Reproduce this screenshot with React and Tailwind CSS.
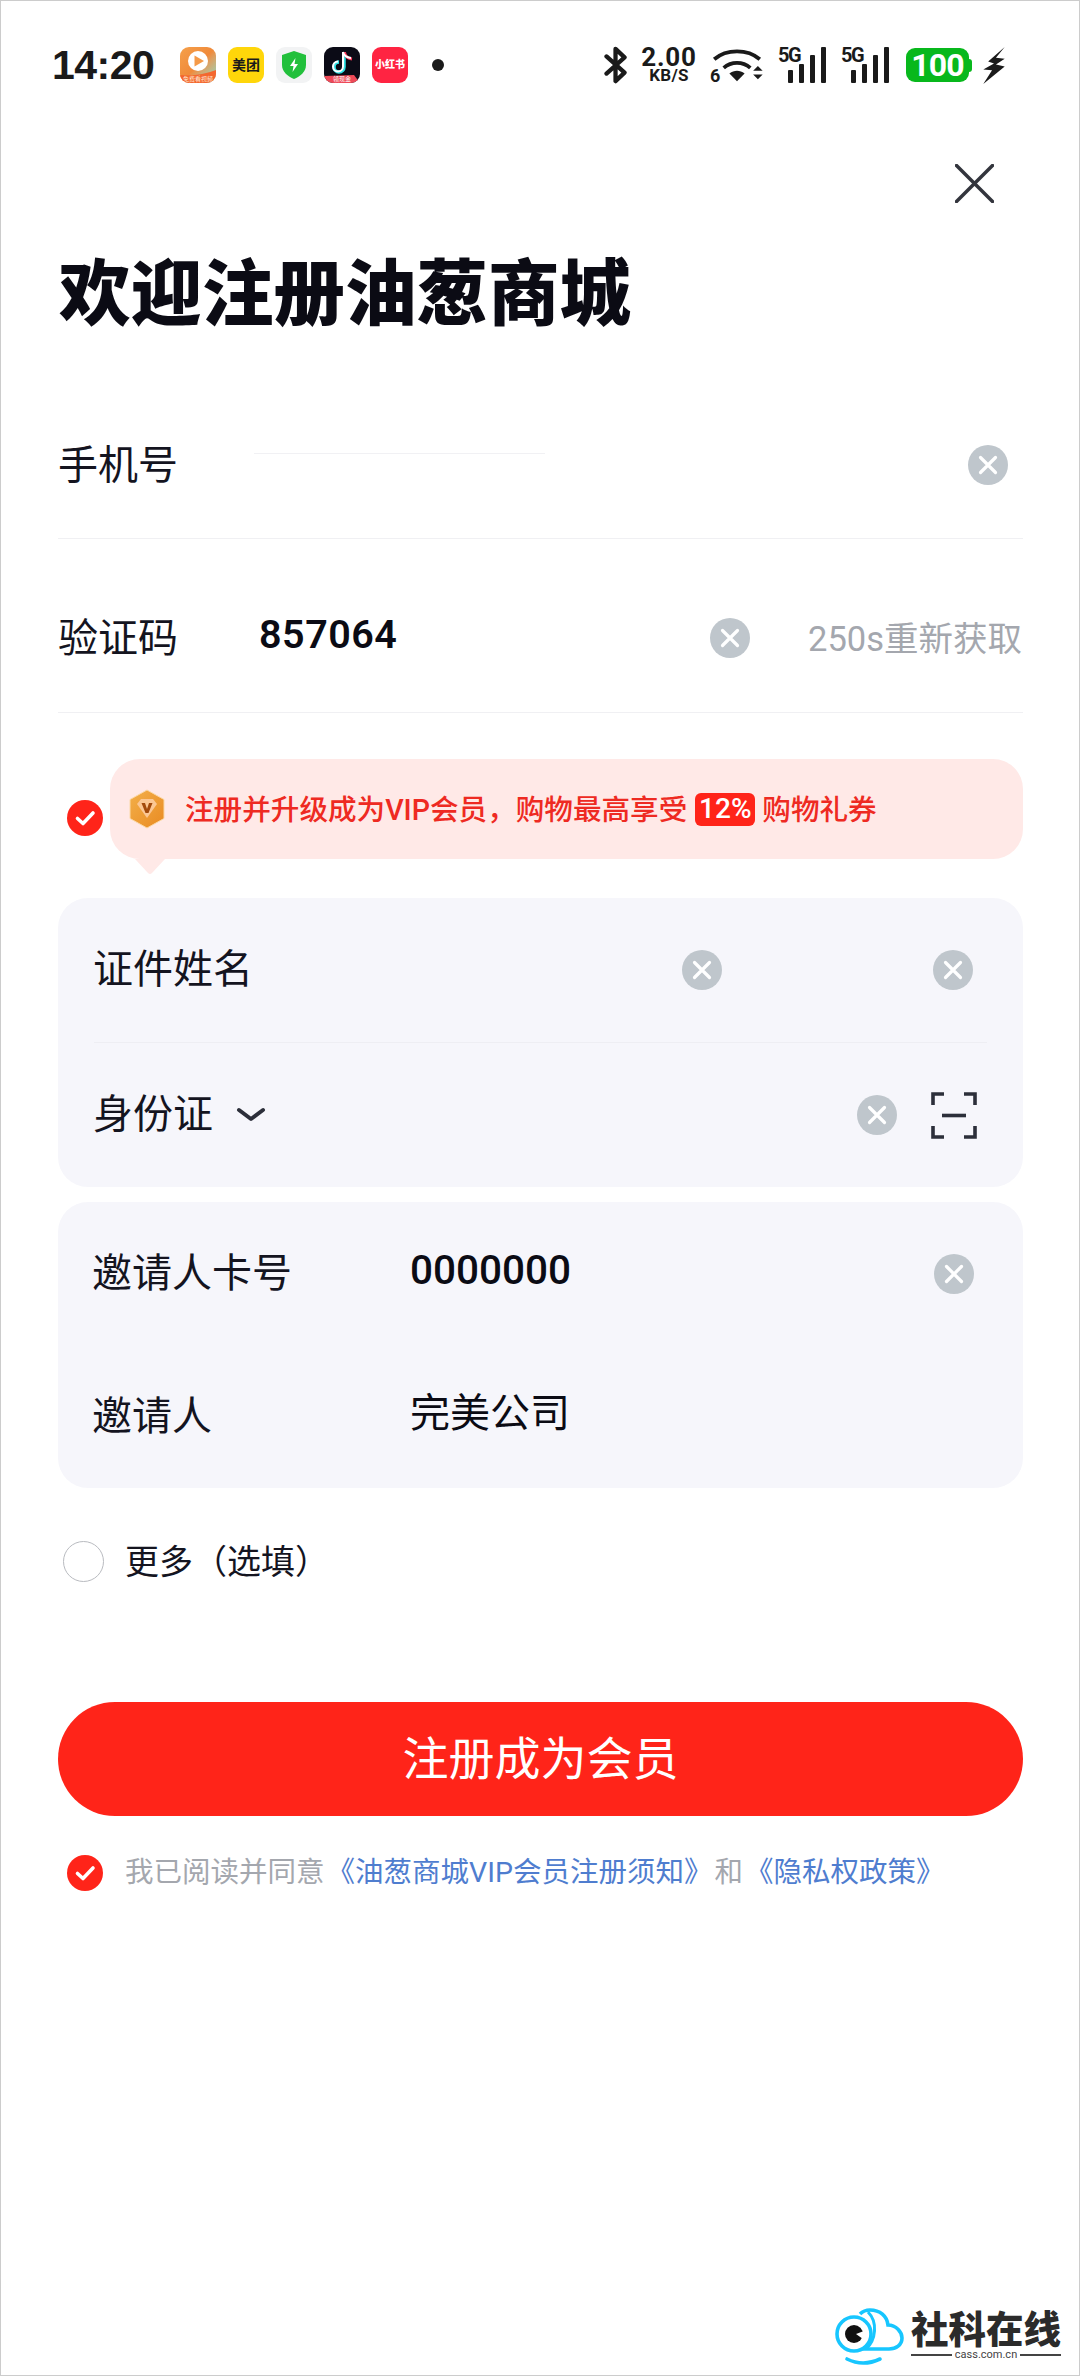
import React from 'react';

const font = { fontFamily: 'Roboto, "Noto Sans CJK SC", sans-serif' };

function ClearIcon({ className = '' }) {
  return (
    <svg width="40" height="40" viewBox="0 0 40 40" className={`shrink-0 ${className}`}>
      <circle cx="20" cy="20" r="20" fill="#bfc6cc" />
      <path d="M12.5 12.5 27.5 27.5M27.5 12.5 12.5 27.5" stroke="#fff" strokeWidth="3.2" strokeLinecap="round" />
    </svg>
  );
}

function CheckCircle() {
  return (
    <svg width="36" height="36" viewBox="0 0 36 36" className="shrink-0">
      <circle cx="18" cy="18" r="18" fill="#ff2419" />
      <path d="M10.5 18.5 16 23.5 26 13" fill="none" stroke="#fff" strokeWidth="3.6" strokeLinecap="round" strokeLinejoin="round" />
    </svg>
  );
}

function AppIcons() {
  return (
    <div className="flex gap-[12px] ml-[26px]">
      <div className="w-[36px] h-[36px] rounded-[9px] overflow-hidden relative bg-gradient-to-br from-[#f5a04a] via-[#f08a3a] to-[#63dcc8]">
        <svg width="36" height="36" viewBox="0 0 36 36">
          <circle cx="18" cy="14" r="10" fill="#fff" />
          <path d="M14.5 8.500 24 14 14.5 19.5Z" fill="#f59a48" />
          <path d="M0 28Q18 30 36 23V36H0Z" fill="#f4672f" />
        </svg>
        <span className="absolute left-0 right-0 bottom-[1px] text-center text-[6px] leading-[7px] text-[#ffe6d0] whitespace-nowrap">免费看视频</span>
      </div>
      <div className="w-[36px] h-[36px] rounded-[9px] bg-[#ffd60a] flex items-center justify-center text-[14px] leading-none font-bold text-[#1a1a1a] whitespace-nowrap">
        美团
      </div>
      <div className="w-[36px] h-[36px] rounded-[9px] bg-[#f2f3f4] flex items-center justify-center">
        <svg width="24" height="28" viewBox="0 0 24 28">
          <path d="M12 0 24 4V14C24 21 18 25.500 12 28 6 25.500 0 21 0 14V4Z" fill="#22c03c" />
          <path d="M13.500 7 8 15H11.500L10.500 21 16 13H12.500Z" fill="#fff" />
        </svg>
      </div>
      <div className="w-[36px] h-[36px] rounded-[9px] overflow-hidden relative bg-[#0b0b16]">
        <svg width="36" height="36" viewBox="0 0 36 36">
          <path d="M20 5V20A5 5 0 1 1 15 15" fill="none" stroke="#2fe3e6" strokeWidth="3.500" />
          <path d="M20.500 5Q21 11 28 12" fill="none" stroke="#ff3a5c" strokeWidth="3" />
          <path d="M19 5V19.500A5 5 0 1 1 14 14.500M19 5Q20 10 27 11" fill="none" stroke="#fff" strokeWidth="2" />
          <path d="M0 29 30 28 36 36H0Z" fill="#ee4a58" />
        </svg>
        <span className="absolute left-[9px] bottom-[1px] text-[6px] leading-[7px] text-white whitespace-nowrap">领现金</span>
      </div>
      <div className="w-[36px] h-[36px] rounded-[9px] bg-[#ff2442] flex items-center justify-center text-[10px] leading-none font-black text-white whitespace-nowrap">
        小红书
      </div>
    </div>
  );
}

function StatusRight() {
  return (
    <div className="flex items-center ml-auto mr-[74px] text-[#1a1a1a]">
      <svg width="24" height="38" viewBox="0 0 24 40">
        <path d="M2 11 21 28 11.500 37V3L21 12 2 29" fill="none" stroke="#1a1a1a" strokeWidth="4.500" strokeLinejoin="round" strokeLinecap="round" />
      </svg>
      <div className="w-[58px] ml-[12px] h-[36px] flex flex-col items-center font-bold leading-none">
        <span className="text-[26px] h-[20px] leading-[20px] tracking-[0.8px]">2.00</span>
        <span className="text-[17px] h-[16px] leading-[16px] tracking-[0.3px]">KB/S</span>
      </div>
      <div className="relative ml-[12px] w-[54px] h-[38px]">
        <svg width="54" height="38" viewBox="0 0 54 40">
          <path d="M3 14C16 3 38 3 51 14" fill="none" stroke="#1a1a1a" strokeWidth="4" />
          <path d="M13 23C21 16 33 16 41 23" fill="none" stroke="#1a1a1a" strokeWidth="4" />
          <path d="M19 29C24 25 30 25 35 29L27 37Z" fill="#1a1a1a" />
          <path d="M44 26H54L49 21ZM44 30H54L49 35Z" fill="#1a1a1a" />
        </svg>
        <span className="absolute left-0 bottom-[1px] text-[18px] leading-[14px] font-bold">6</span>
      </div>
      <Signal className="ml-[14px]" />
      <Signal className="ml-[14px]" />
      <div className="ml-[16px] w-[63px] h-[34px] rounded-[9px] bg-[#08b81c] flex items-center justify-center text-[32px] leading-none font-bold text-white tracking-tight">
        100
      </div>
      <div className="w-[3px] h-[13px] bg-[#08b81c] rounded-r-sm" />
      <svg width="22" height="37" viewBox="0 0 22 38" className="ml-[11px]">
        <path d="M22 0 5 15 11 17 0 23 9 24 0 38 22 20 13 18 22 12 13 11Z" fill="#1a1a1a" />
      </svg>
    </div>
  );
}

function Signal({ className = '' }) {
  return (
    <div className={`relative w-[49px] h-[36px] ${className}`}>
      <span className="absolute left-0 top-0 text-[20px] leading-[17px] font-bold tracking-[-1.5px]">5G</span>
      <svg width="49" height="36" viewBox="0 0 49 36">
        <rect x="10" y="23" width="5" height="13" rx="1" fill="#1a1a1a" />
        <rect x="21" y="17" width="5" height="19" rx="1" fill="#1a1a1a" />
        <rect x="32" y="8" width="5" height="28" rx="1" fill="#1a1a1a" />
        <rect x="43" y="0" width="5" height="36" rx="1" fill="#1a1a1a" />
      </svg>
    </div>
  );
}

function Medal() {
  return (
    <svg width="38" height="40" viewBox="0 0 38 40" className="shrink-0">
      <defs>
        <linearGradient id="medal" x1="0" y1="0" x2="1" y2="1">
          <stop offset="0" stopColor="#f3b04a" />
          <stop offset="1" stopColor="#e98a22" />
        </linearGradient>
      </defs>
      <path d="M19 1 36 10.500V29.500L19 39 2 29.500V10.500Z" fill="url(#medal)" stroke="#fbd9a8" strokeWidth="1" />
      <path d="M9 15 13 10H25L29 15 19 29Z" fill="#fbc794" />
      <path d="M13.500 14H17L19 20 21 14H24.500L20.500 24H17.500Z" fill="#a34a0c" />
    </svg>
  );
}

function ScanIcon({ className = '' }) {
  return (
    <svg width="46" height="47" viewBox="0 0 46 47" className={`shrink-0 ${className}`}>
      <path d="M13 2H2V13M33 2H44V13M2 34V45H13M44 34V45H33" fill="none" stroke="#2c2f3a" strokeWidth="3.600" />
      <path d="M11 23.500H35" stroke="#2c2f3a" strokeWidth="3.600" />
    </svg>
  );
}

function Logo() {
  return (
    <svg width="80" height="70" viewBox="0 0 80 70" className="shrink-0">
      <path d="M30 10C34 6 38 6 40 6 50 6 57 12 58 21 66 21 72 28 72 34 72 41 66 45 59 45H28" fill="none" stroke="#17c6ff" strokeWidth="3.600" />
      <path d="M38 8C48 18 46 36 36 45" fill="none" stroke="#17c6ff" strokeWidth="3" />
      <circle cx="24" cy="30" r="17" fill="#fff" stroke="#17c6ff" strokeWidth="3.600" />
      <circle cx="24" cy="30" r="9" fill="#111" />
      <path d="M34 27 26 30 33 35Z" fill="#fff" />
      <path d="M17 55Q33 63 50 55" fill="none" stroke="#17c6ff" strokeWidth="3.600" strokeLinecap="round" />
    </svg>
  );
}

export default function App() {
  return (
    <div style={font} className="relative w-[1080px] h-[2376px] overflow-hidden bg-white border border-[#cccccc] text-[#14141f]">
      {/* status bar */}
      <div className="h-[128px] flex items-center pl-[51px]">
        <span style={{ fontFamily: '"Liberation Sans", sans-serif' }} className="w-[102px] text-[41px] leading-none font-bold tracking-[-0.5px] text-[#1a1a1a] whitespace-nowrap">14:20</span>
        <AppIcons />
        <span className="ml-[24px] w-[12px] h-[12px] rounded-full bg-[#1a1a1a]" />
        <StatusRight />
      </div>

      {/* close */}
      <div className="pt-[35px] pr-[85px] flex justify-end">
        <svg width="39" height="39" viewBox="0 0 39 39">
          <path d="M1.500 1.500 37.500 37.500M37.500 1.500 1.500 37.500" stroke="#33353d" strokeWidth="3.500" strokeLinecap="round" />
        </svg>
      </div>

      <div className="pl-[57px] pr-[56px]">
        <h1 className="mt-[42px] ml-[1px] h-[100px] flex items-center text-[71.5px] leading-none font-black text-[#0b0b14] whitespace-nowrap">
          欢迎注册油葱商城
        </h1>

        <div className="relative mt-[47px] h-[147px] flex items-center pr-[15px] border-b border-[#f0f0f3]">
          <span className="text-[40px] leading-none pt-[2px]">手机号</span>
          <div className="absolute left-[196px] top-[61px] w-[291px] h-px bg-[#f1f1f4]" />
          <ClearIcon className="ml-auto" />
        </div>

        <div className="h-[174px] pt-[25px] flex items-center border-b border-[#f0f0f3]">
          <span className="w-[201px] text-[40px] leading-none pt-[2px]">验证码</span>
          <span className="flex-1 text-[39.5px] leading-none font-semibold tracking-[0.5px] text-[#0b0b14] -mt-[6px]">857064</span>
          <ClearIcon />
          <span className="w-[215px] ml-[58px] text-[34.5px] leading-none text-[#a4a7ae] whitespace-nowrap pt-[2px]">250s重新获取</span>
        </div>

        {/* vip banner */}
        <div className="mt-[46px] flex items-start">
          <div className="ml-[9px] mt-[41px]">
            <CheckCircle />
          </div>
          <div className="relative ml-[7px] flex-1 h-[100px] rounded-[30px] bg-[#ffe9e7] flex items-center pl-[18px] text-[28.6px] leading-none font-medium text-[#ee2a22] whitespace-nowrap">
            <Medal />
            <span className="ml-[19px] pt-[2px]">注册并升级成为VIP会员，购物最高享受</span>
            <span className="ml-[8px] w-[60px] h-[33px] rounded-[6px] bg-[#ff2419] text-white font-medium text-[28px] flex items-center justify-center">12%</span>
            <span className="ml-[7px] pt-[2px]">购物礼券</span>
            <svg width="30" height="16" viewBox="0 0 30 16" className="absolute left-[25px] top-[100px]">
              <path d="M0 0H30L17 14Q15 16 13 14Z" fill="#ffe9e7" />
            </svg>
          </div>
        </div>

        {/* id card */}
        <div className="mt-[39px] h-[289px] rounded-[30px] bg-[#f6f6fb]">
          <div className="h-[145px] flex items-center mx-[36px] border-b border-[#eeeef3] pr-[14px]">
            <span className="flex-1 -ml-[1px] text-[40px] leading-none">证件姓名</span>
            <ClearIcon />
            <ClearIcon className="ml-[211px]" />
          </div>
          <div className="h-[144px] flex items-center pl-[35px] pr-[46px]">
            <span className="text-[40px] leading-none">身份证</span>
            <svg width="30" height="16" viewBox="0 0 30 16" className="ml-[23px]">
              <path d="M3 3 15 12 27 3" fill="none" stroke="#2c2f3a" strokeWidth="4" strokeLinecap="round" strokeLinejoin="round" />
            </svg>
            <ClearIcon className="ml-auto" />
            <ScanIcon className="ml-[34px]" />
          </div>
        </div>

        {/* inviter */}
        <div className="mt-[15px] h-[286px] rounded-[30px] bg-[#f6f6fb] pl-[34px] pr-[49px]">
          <div className="h-[143px] flex items-center">
            <span className="w-[318px] text-[40px] leading-none">邀请人卡号</span>
            <span className="flex-1 text-[40.5px] leading-none font-medium text-[#0b0b14] -mt-[6px]">0000000</span>
            <ClearIcon />
          </div>
          <div className="h-[143px] flex items-center">
            <span className="w-[318px] text-[40px] leading-none">邀请人</span>
            <span className="flex-1 text-[40px] leading-none text-[#0b0b14] -mt-[6px]">完美公司</span>
          </div>
        </div>

        {/* more */}
        <div className="mt-[53px] ml-[5px] flex items-center">
          <div className="w-[41px] h-[41px] rounded-full border border-[#b9bbc0]" />
          <span className="ml-[21px] text-[34px] leading-none pt-[1px]">更多（选填）</span>
        </div>

        <button className="mt-[120px] w-full h-[114px] rounded-full bg-[#ff2419] text-white text-[46px] leading-none">
          注册成为会员
        </button>

        <div className="mt-[39px] ml-[9px] flex items-center text-[28.5px] leading-none whitespace-nowrap">
          <CheckCircle />
          <span className="ml-[22px] text-[#a4a7ae]">我已阅读并同意</span>
          <span className="ml-[2px] text-[#4f7dcf]">《油葱商城VIP会员注册须知》</span>
          <span className="ml-[2px] text-[#a4a7ae]">和</span>
          <span className="ml-[2px] text-[#4f7dcf]">《隐私权政策》</span>
        </div>
      </div>

      {/* watermark */}
      <div className="absolute right-[-1px] bottom-[-1px] w-[252px] h-[86px] bg-white flex items-start pt-[14px] pl-[2px]">
        <Logo />
        <div className="ml-[1px] w-[150px] pt-[3px] text-[#2b2b2b]">
          <div style={{ fontFamily: '"Noto Sans CJK SC", sans-serif' }} className="text-[37.5px] leading-[40px] font-black whitespace-nowrap">社科在线</div>
          <div className="mt-[2px] flex items-center gap-[3px] text-[11px] leading-none text-[#444]">
            <span className="flex-1 h-[2px] bg-[#444]" />
            <span>cass.com.cn</span>
            <span className="flex-1 h-[2px] bg-[#444]" />
          </div>
        </div>
      </div>
    </div>
  );
}
